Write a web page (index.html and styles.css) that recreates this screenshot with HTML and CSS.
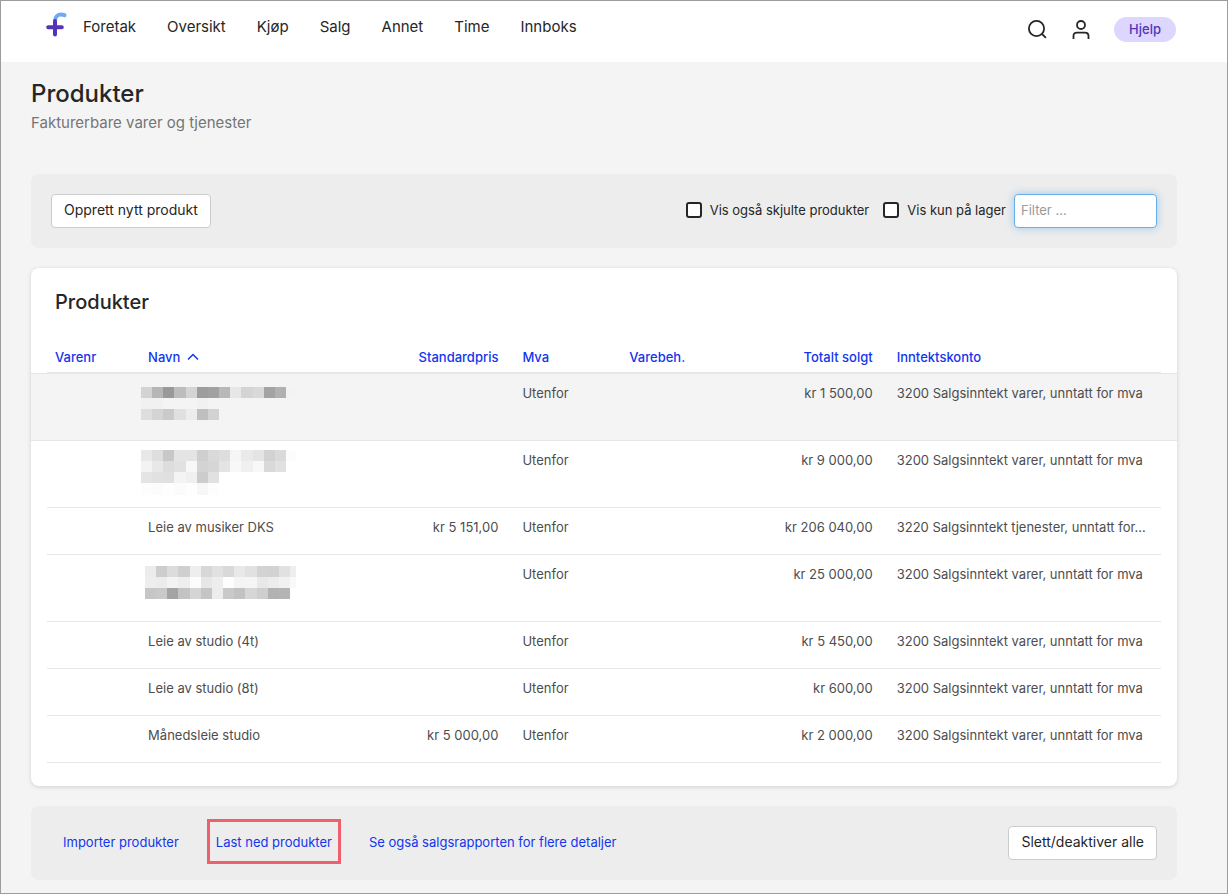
FILE: index.html
```html
<!DOCTYPE html>
<html lang="no">
<head>
    <meta charset="UTF-8">
    <meta name="viewport" content="width=device-width, initial-scale=1.0">
    <title>Produkter</title>
    <link rel="stylesheet" href="styles.css">
</head>
<body>

    <header class="topbar">
        <a class="logo" href="#" aria-label="Hjem">
            <svg width="22" height="26" viewBox="0 0 22 26" fill="none" stroke-linecap="round">
                <path d="M9 10.5V9C9 5 12 2.6 15 2.6C16.500 2.600 17.500 2.800 18.500 3.200" stroke="#6fa8f7" stroke-width="4" stroke-linecap="round"/>
                <path d="M9 9V22.500M2.200 15.300H15.800" stroke="#5433b8" stroke-width="4"/>
            </svg>
        </a>
        <nav class="menu">
            <a href="#">Foretak</a>
            <a href="#">Oversikt</a>
            <a href="#">Kjøp</a>
            <a href="#">Salg</a>
            <a href="#">Annet</a>
            <a href="#">Time</a>
            <a href="#">Innboks</a>
        </nav>
        <div class="tools">
            <button class="icon-button" aria-label="Søk">
                <svg width="20" height="20" viewBox="0 1 20 20" fill="none" stroke="#262626" stroke-width="1.8">
                    <circle cx="9.500" cy="9.500" r="7.600"/>
                    <path d="M14.900 14.900L18.900 18.900"/>
                </svg>
            </button>
            <button class="icon-button" aria-label="Bruker">
                <svg width="20" height="20" viewBox="0 0 20 20" fill="none" stroke="#262626" stroke-width="1.8">
                    <circle cx="10" cy="5" r="4"/>
                    <path d="M2.500 19V16C2.500 13.800 3.800 12.600 6 12.600H14C16.200 12.600 17.500 13.800 17.500 16V19"/>
                </svg>
            </button>
            <button class="help-button">Hjelp</button>
        </div>
    </header>

    <main class="container">
        <h1>Produkter</h1>
        <p class="subtitle">Fakturerbare varer og tjenester</p>

        <div class="toolbar">
            <button class="button">Opprett nytt produkt</button>
            <div class="filters">
                <label class="check"><input type="checkbox"><span>Vis også skjulte produkter</span></label>
                <label class="check"><input type="checkbox"><span>Vis kun på lager</span></label>
                <input class="filter-input" type="text" placeholder="Filter …" aria-label="Filter">
            </div>
        </div>

        <section class="card">
            <h2>Produkter</h2>
            <table class="products">
                <colgroup>
                    <col class="col-number">
                    <col class="col-name">
                    <col class="col-price">
                    <col class="col-vat">
                    <col class="col-stock">
                    <col class="col-total">
                    <col class="col-account">
                </colgroup>
                <thead>
                    <tr>
                        <th>Varenr</th>
                        <th>Navn <svg class="sort" width="12" height="8" viewBox="0 0 12 8" fill="none" stroke="#1236ee" stroke-width="1.5"><path d="M1 6.500L6 1.500L11 6.500"/></svg></th>
                        <th class="number">Standardpris</th>
                        <th>Mva</th>
                        <th>Varebeh.</th>
                        <th class="number">Totalt solgt</th>
                        <th>Inntektskonto</th>
                    </tr>
                </thead>
                <tbody>
                    <tr class="active">
                        <td></td>
                        <td><svg class="mosaic" id="mosaic-1"></svg></td>
                        <td class="number"></td>
                        <td>Utenfor</td>
                        <td></td>
                        <td class="number">kr 1 500,00</td>
                        <td>3200 Salgsinntekt varer, unntatt for mva</td>
                    </tr>
                    <tr>
                        <td></td>
                        <td><svg class="mosaic" id="mosaic-2"></svg></td>
                        <td class="number"></td>
                        <td>Utenfor</td>
                        <td></td>
                        <td class="number">kr 9 000,00</td>
                        <td>3200 Salgsinntekt varer, unntatt for mva</td>
                    </tr>
                    <tr>
                        <td></td>
                        <td>Leie av musiker DKS</td>
                        <td class="number">kr 5 151,00</td>
                        <td>Utenfor</td>
                        <td></td>
                        <td class="number">kr 206 040,00</td>
                        <td>3220 Salgsinntekt tjenester, unntatt for…</td>
                    </tr>
                    <tr>
                        <td></td>
                        <td><svg class="mosaic" id="mosaic-3"></svg></td>
                        <td class="number"></td>
                        <td>Utenfor</td>
                        <td></td>
                        <td class="number">kr 25 000,00</td>
                        <td>3200 Salgsinntekt varer, unntatt for mva</td>
                    </tr>
                    <tr>
                        <td></td>
                        <td>Leie av studio (4t)</td>
                        <td class="number"></td>
                        <td>Utenfor</td>
                        <td></td>
                        <td class="number">kr 5 450,00</td>
                        <td>3200 Salgsinntekt varer, unntatt for mva</td>
                    </tr>
                    <tr>
                        <td></td>
                        <td>Leie av studio (8t)</td>
                        <td class="number"></td>
                        <td>Utenfor</td>
                        <td></td>
                        <td class="number">kr 600,00</td>
                        <td>3200 Salgsinntekt varer, unntatt for mva</td>
                    </tr>
                    <tr>
                        <td></td>
                        <td>Månedsleie studio</td>
                        <td class="number">kr 5 000,00</td>
                        <td>Utenfor</td>
                        <td></td>
                        <td class="number">kr 2 000,00</td>
                        <td>3200 Salgsinntekt varer, unntatt for mva</td>
                    </tr>
                </tbody>
            </table>
        </section>

        <div class="toolbar">
            <div class="links">
                <a href="#">Importer produkter</a>
                <a class="marked" href="#">Last ned produkter</a>
                <a href="#">Se også salgsrapporten for flere detaljer</a>
            </div>
            <button class="button">Slett/deaktiver alle</button>
        </div>
    </main>

    <script>
        // Grey shades for the masked product names, one string per row of squares
        const mosaics = {
            "mosaic-1": { x: -7, y: 4, rows: [
                "d3 b6 99 bd d4 9d a1 b8 e7 d4 d9 a3 b1 f3",
                "f1 f1 f4 f4 f4 f1",
                "de d4 ca e0 ec bf d2"
            ] },
            "mosaic-2": { x: -7, y: 0, rows: [
                "e8 de c8 e4 e4 cf d9 dd f5 ea e4 d2 da fc",
                "f3 e8 dd e1 f7 d3 d6 e4 f8 f0 f8 d9 e1",
                "e4 e1 e0 f4 f0 cc e1",
                "fd fc fe fb fe f7 fd"
            ] },
            "mosaic-3": { x: -3, y: 2, rows: [
                "ec cd dc cf ee d7 e1 d9 e8 e1 d3 d2 e1 ee",
                "ee ec f3 ee fc e7 ed fd f4 f5 e8 ec f1 f9",
                "c6 c9 a4 c3 d5 c5 ec c9 c2 d6 ce b2 b4"
            ] }
        };

        function drawMosaic(id, mosaic) {
            const size = 11.15;
            const maxX = 148;
            let squares = "";
            mosaic.rows.forEach(function (row, r) {
                row.split(" ").forEach(function (shade, c) {
                    const x = mosaic.x + Math.round(c * size);
                    const y = mosaic.y + Math.round(r * size);
                    const w = Math.min(mosaic.x + Math.round((c + 1) * size), maxX) - x;
                    const h = mosaic.y + Math.round((r + 1) * size) - y;
                    squares += `<rect x="${x}" y="${y}" width="${w}" height="${h}" fill="#${shade}${shade}${shade}"/>`;
                });
            });
            document.getElementById(id).innerHTML = squares;
        }

        for (const id in mosaics) {
            drawMosaic(id, mosaics[id]);
        }
    </script>

</body>
</html>
```
FILE: styles.css
```css
* {
    box-sizing: border-box;
}

body {
    font-family: Inter, "Liberation Sans", sans-serif;
    font-size: 13px;
    line-height: 20px;
    color: #262626;
    background-color: #f4f4f4;
    margin: 0;
    min-height: 100vh;
    border: 1px solid #9c9c9c;
}

a {
    color: #1236ee;
    text-decoration: none;
}

button,
input {
    font: inherit;
    color: inherit;
}

.topbar {
    display: flex;
    align-items: center;
    height: 61px;
    padding: 0 51px 8px 45px;
    background-color: white;
}

.logo {
    display: flex;
    margin-right: 15px;
    padding-bottom: 6px;
}

.menu {
    display: flex;
    gap: 31px;
    padding-bottom: 2px;
    font-size: 15px;
}

.menu a {
    color: #262626;
}

.tools {
    display: flex;
    align-items: center;
    gap: 22px;
    margin-left: auto;
    padding-top: 4px;
}

.icon-button {
    display: flex;
    padding: 0 1px;
    border: none;
    background: none;
    cursor: pointer;
}

.help-button {
    height: 25px;
    padding: 0 15px 2px;
    border: none;
    border-radius: 13px;
    background-color: #ddd6fe;
    color: #5433b8;
    font-weight: 500;
    cursor: pointer;
}

.container {
    padding: 16px 50px 13px 30px;
}

h1 {
    margin: 0;
    font-size: 24px;
    font-weight: 500;
    line-height: 32px;
}

.subtitle {
    margin: 2px 0 40px;
    font-size: 15px;
    line-height: 22px;
    color: #757575;
}

.toolbar {
    display: flex;
    justify-content: space-between;
    align-items: center;
    height: 74px;
    padding: 0 20px;
    border-radius: 8px;
    background-color: #ededed;
}

.button {
    height: 34px;
    padding: 0 12px 2px;
    border: 1px solid #ccc;
    border-radius: 4px;
    background-color: white;
    font-size: 14px;
    cursor: pointer;
}

.filters {
    display: flex;
    align-items: center;
}

.check {
    display: flex;
    align-items: center;
    gap: 8px;
    margin-right: 14px;
    padding-bottom: 2px;
}

.check + .check {
    margin-right: 8px;
}

.check input {
    appearance: none;
    width: 16px;
    height: 16px;
    margin: 0;
    border: 2px solid #262626;
    border-radius: 3px;
    background-color: white;
}

.filter-input {
    width: 143px;
    height: 34px;
    padding: 0 6px 2px;
    border: 1px solid #66afe9;
    border-radius: 4px;
    outline: none;
    box-shadow: 0 0 8px rgba(102, 175, 233, 0.6);
}

.filter-input::placeholder {
    color: #999;
}

.card {
    margin: 20px 0;
    padding: 20px 16px 23px;
    border-radius: 8px;
    background-color: white;
    box-shadow: 0 1px 4px rgba(0, 0, 0, 0.15);
}

h2 {
    margin: 0 8px 21px;
    font-size: 20px;
    font-weight: 500;
    line-height: 28px;
}

.products {
    width: 100%;
    table-layout: fixed;
    border-collapse: separate;
    border-spacing: 0;
}

.col-number {
    width: 8%;
}

.col-name {
    width: 22%;
}

.col-price {
    width: 11.6%;
}

.col-vat {
    width: 9.6%;
}

.col-stock {
    width: 9%;
}

.col-total {
    width: 15%;
}

th,
td {
    padding: 9px 12px 17px;
    border-bottom: 1px solid #e6e6e6;
    text-align: left;
    vertical-align: top;
    color: #4d4d4d;
    white-space: nowrap;
}

th {
    padding-top: 10px;
    padding-bottom: 5px;
    border-bottom-width: 2px;
    font-weight: 500;
    color: #1236ee;
}

th:first-child,
td:first-child {
    padding-left: 8px;
}

th:last-child,
td:last-child {
    padding-right: 8px;
}

.number {
    text-align: right;
}

.sort {
    margin-left: 3px;
    vertical-align: 1px;
}

/* the selected row runs out to the edges of the card */
.active td {
    position: relative;
    background-color: #f4f4f4;
}

.active td:first-child::before,
.active td:last-child::after {
    content: "";
    position: absolute;
    top: -1px;
    bottom: -1px;
    width: 16px;
    border: solid #e6e6e6;
    border-width: 1px 0;
    background-color: #f4f4f4;
}

.active td:first-child::before {
    right: 100%;
}

.active td:last-child::after {
    left: 100%;
}

.mosaic {
    display: block;
    width: 160px;
    height: 40px;
    overflow: visible;
}

.links {
    display: flex;
    align-items: center;
    gap: 28px;
    padding: 0 0 3px 12px;
}

.marked {
    padding: 10px 6px 9px;
    border: 3px solid #ee606b;
}
```
